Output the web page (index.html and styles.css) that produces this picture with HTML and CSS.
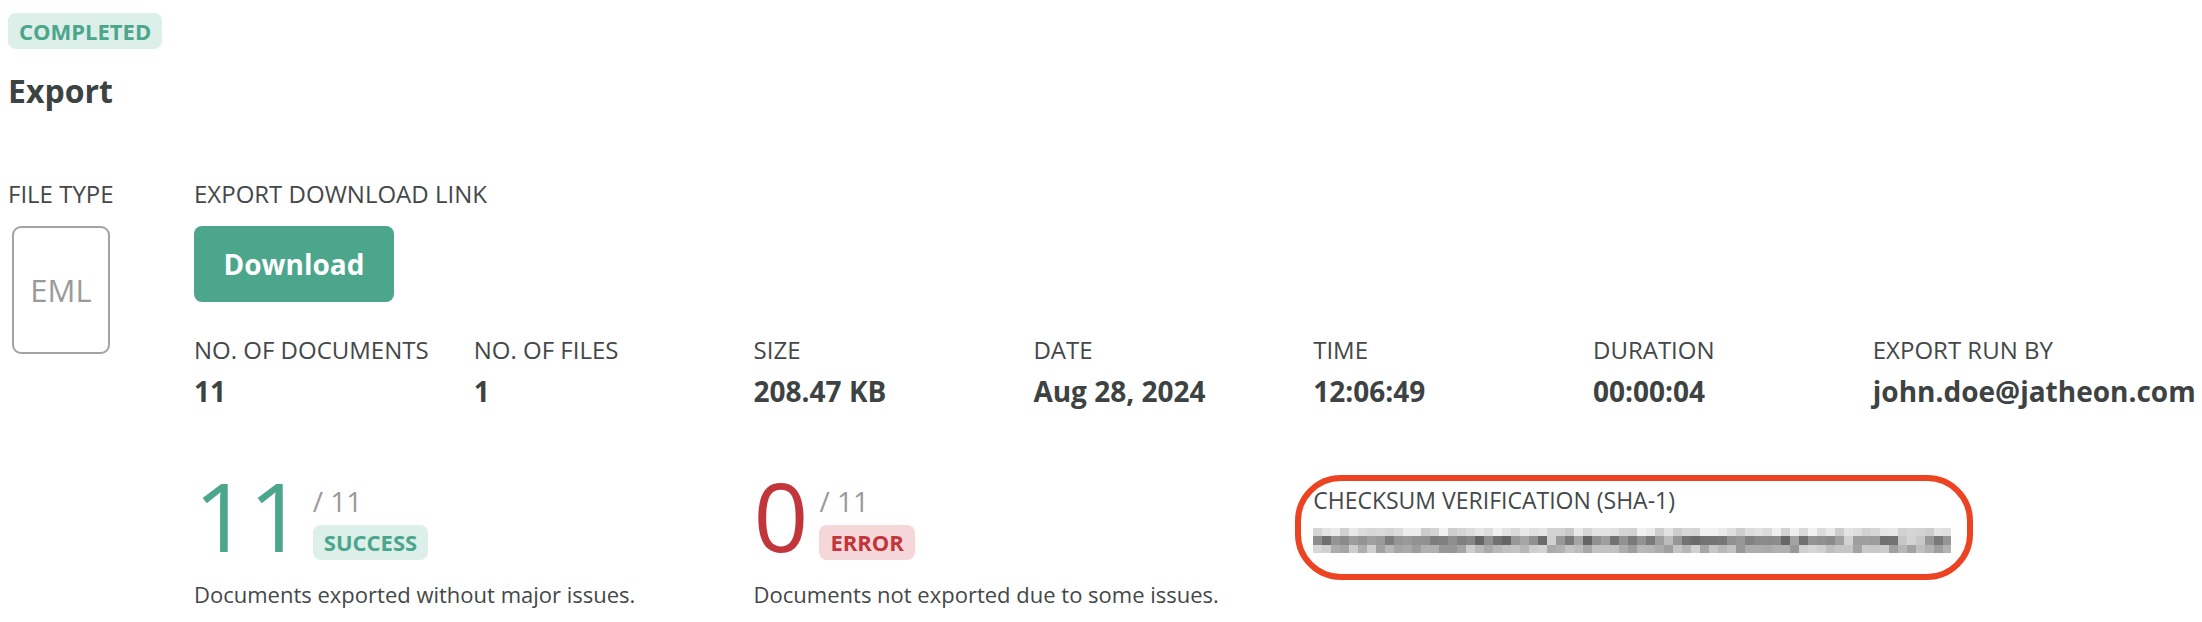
FILE: index.html
```html
<!DOCTYPE html>
<html lang="en">
<head>
<meta charset="utf-8">
<title>Export</title>
<link rel="stylesheet" href="styles.css">
</head>
<body>
<div class="page">
  <div class="status-row"><span class="status">COMPLETED</span></div>
  <h1 class="title">Export</h1>
  <div class="layout">
    <div class="file-col">
      <div class="label">FILE TYPE</div>
      <div class="file-box">EML</div>
    </div>
    <div class="main-col">
      <div class="label">EXPORT DOWNLOAD LINK</div>
      <button class="download" type="button">Download</button>
      <div class="stats">
        <div class="stat"><div class="label">NO. OF DOCUMENTS</div><div class="value">11</div></div>
        <div class="stat"><div class="label">NO. OF FILES</div><div class="value">1</div></div>
        <div class="stat"><div class="label">SIZE</div><div class="value">208.47 KB</div></div>
        <div class="stat"><div class="label">DATE</div><div class="value">Aug 28, 2024</div></div>
        <div class="stat"><div class="label">TIME</div><div class="value">12:06:49</div></div>
        <div class="stat"><div class="label">DURATION</div><div class="value">00:00:04</div></div>
        <div class="stat"><div class="label">EXPORT RUN BY</div><div class="value">john.doe@jatheon.com</div></div>
      </div>
      <div class="results">
        <div class="result success">
          <div class="result-top">
            <span class="big">11</span>
            <div class="side"><span class="total">/ 11</span><span class="pill">SUCCESS</span></div>
          </div>
          <p class="desc">Documents exported without major issues.</p>
        </div>
        <div class="result error">
          <div class="result-top">
            <span class="big">0</span>
            <div class="side"><span class="total">/ 11</span><span class="pill">ERROR</span></div>
          </div>
          <p class="desc">Documents not exported due to some issues.</p>
        </div>
        <div class="checksum">
          <div class="label check-label">CHECKSUM VERIFICATION (SHA-1)</div>
          <canvas class="hash" id="hash" width="638" height="25"></canvas>
          <div class="highlight"></div>
        </div>
      </div>
    </div>
  </div>
</div>
<script src="script.js"></script>
</body>
</html>
```

FILE: styles.css
```css
body {
  margin: 0;
  background: #ffffff;
  color: #444848;
  font-family: "Open Sans", "Liberation Sans", sans-serif;
}

.page {
  padding: 13px 8px 0;
}

.status-row {
  display: flex;
}

.status {
  height: 36px;
  line-height: 36px;
  padding: 0 11px;
  border-radius: 8px;
  background: #dcefe9;
  color: #4ba68c;
  font-size: 22px;
  font-weight: 700;
}

.title {
  margin: 20px 0 0;
  font-size: 32px;
  line-height: 44px;
  font-weight: 700;
  color: #3d4242;
}

.layout {
  display: flex;
  margin-top: 65px;
}

.file-col {
  width: 186px;
  flex: none;
}

.label {
  font-size: 24px;
  line-height: 32px;
  color: #444848;
  white-space: nowrap;
}

.file-box {
  margin: 16px 0 0 4px;
  width: 98px;
  height: 128px;
  box-sizing: border-box;
  border: 2px solid #a3a3a3;
  border-radius: 9px;
  display: flex;
  align-items: center;
  justify-content: center;
  font-size: 31px;
  color: #9a9a9a;
}

.main-col {
  flex: 1;
}

.download {
  display: block;
  margin-top: 16px;
  width: 200px;
  height: 76px;
  padding: 0;
  border: 0;
  border-radius: 8px;
  background: #4ba68c;
  color: #ffffff;
  font-family: "Open Sans", "Liberation Sans", sans-serif;
  font-size: 28px;
  font-weight: 700;
}

.stats {
  display: grid;
  grid-template-columns: repeat(7, 279.8px);
  margin-top: 32px;
}

.value {
  margin-top: 6px;
  font-size: 28px;
  line-height: 38px;
  font-weight: 700;
  color: #3d4242;
  white-space: nowrap;
}

.results {
  display: grid;
  grid-template-columns: repeat(7, 279.8px);
  margin-top: 57px;
}

.result {
  grid-column: span 2;
}

.result-top {
  display: flex;
  align-items: flex-start;
}

.big {
  font-size: 96px;
  line-height: 96px;
  font-weight: 400;
}

.success .big {
  color: #4ba68c;
}

.error .big {
  color: #c2353b;
}

.side {
  margin-left: 9px;
  padding-top: 15px;
  display: flex;
  flex-direction: column;
  align-items: flex-start;
}

.error .side {
  margin-left: 11px;
}

.total {
  font-size: 28px;
  line-height: 38px;
  color: #9a9a9a;
}

.pill {
  margin-top: 5px;
  height: 35px;
  line-height: 35px;
  padding: 0 11px;
  border-radius: 8px;
  font-size: 22px;
  font-weight: 700;
}

.success .pill {
  background: #dcefe9;
  color: #4ba68c;
}

.error .pill {
  background: #f6d7d9;
  color: #c2353b;
}

.desc {
  margin: 15px 0 0;
  font-size: 22px;
  line-height: 32px;
  color: #444848;
  white-space: nowrap;
}

.checksum {
  grid-column: span 3;
  position: relative;
  padding-top: 18px;
}

.check-label {
  font-size: 23px;
  line-height: 30px;
}

.hash {
  display: block;
  margin-top: 13px;
  width: 638px;
  height: 25px;
}

.highlight {
  position: absolute;
  left: -18px;
  top: 8px;
  width: 678px;
  height: 105px;
  box-sizing: border-box;
  border: 6px solid #ec4423;
  border-radius: 46px;
}
```

FILE: script.js
```js
(function () {
  var canvas = document.getElementById('hash');
  if (!canvas) return;
  var ctx = canvas.getContext('2d');
  var seed = 12345;
  function rnd() {
    seed = (seed * 1103515245 + 12345) % 2147483648;
    return seed / 2147483648;
  }
  var cw = 9;
  var rows = [
    { y: 0, h: 8, lo: 200, hi: 242 },
    { y: 8, h: 9, lo: 100, hi: 165 },
    { y: 17, h: 8, lo: 150, hi: 215 }
  ];
  var cols = Math.ceil(canvas.width / cw);
  for (var c = 0; c < cols; c++) {
    var gap = rnd() < 0.1;
    for (var r = 0; r < rows.length; r++) {
      var row = rows[r];
      var v = Math.round(row.lo + rnd() * (row.hi - row.lo));
      if (gap && r === 1) v = 185 + Math.round(rnd() * 30);
      ctx.fillStyle = 'rgb(' + v + ',' + v + ',' + v + ')';
      ctx.fillRect(c * cw, row.y, cw, row.h);
    }
  }
})();
```
